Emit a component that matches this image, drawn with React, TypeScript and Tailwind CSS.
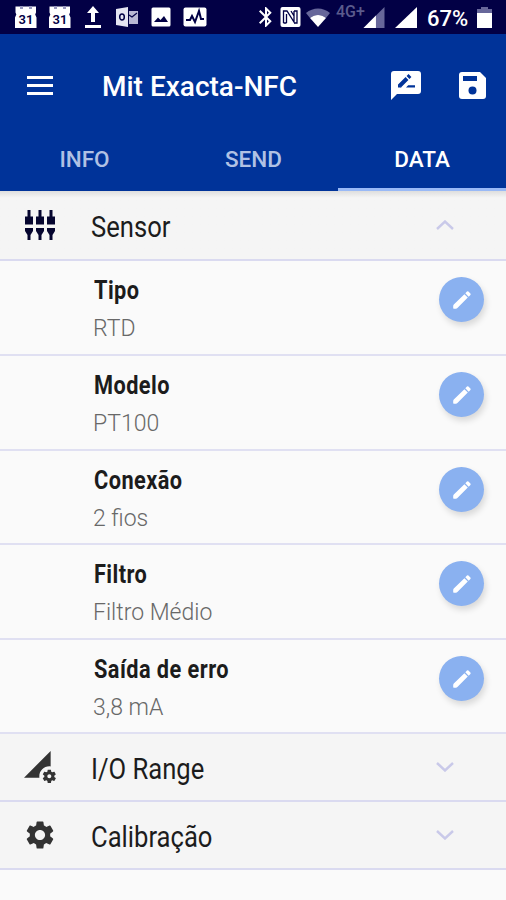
import { useState } from "react"
import type { ReactNode } from "react"
import { MdBluetooth, MdPermDataSetting, MdSettings } from "react-icons/md"

const tabs = ["INFO", "SEND", "DATA"]

const fields = [
  { label: "Tipo", value: "RTD", height: "h-[95px]" },
  { label: "Modelo", value: "PT100", height: "h-[95px]" },
  { label: "Conexão", value: "2 fios", height: "h-[94px]" },
  { label: "Filtro", value: "Filtro Médio", height: "h-[95px]" },
  { label: "Saída de erro", value: "3,8 mA", height: "h-[94px]" },
]

const CalendarIcon = () => (
  <svg viewBox="0 0 24 24" className="h-6 w-6" aria-hidden="true">
    <path fill="#fff" d="M1.5 1.5H22v6l-.8 2 1.3 3V23H1V12.5l1.3-3-.8-2z" />
    <path fill="#9a9ac0" d="M6 1h3v3H6zM15 1h3v3h-3z" />
    <text x="12" y="18.5" textAnchor="middle" fontSize="13" fontWeight="600" fill="#020045" fontFamily="Roboto">
      31
    </text>
  </svg>
)

const ReviewIcon = () => (
  <svg viewBox="0 0 30 30" className="h-[30px] w-[30px]" aria-hidden="true">
    <path fill="#fff" d="M3 1h24q3 0 3 3v17q0 3-3 3H6l-6 6V4q0-3 3-3z" />
    <path fill="none" stroke="#003399" strokeWidth="4" d="M8.5 16L16 8.500M17 7.500l2-2" />
    <path fill="#003399" d="M7 14v3.500h3.500zM15 17.500l2.200-2.300H24v2.300z" />
  </svg>
)

const SaveIcon = () => (
  <svg viewBox="0 0 27 27" className="h-[27px] w-[27px]" aria-hidden="true">
    <path fill="#fff" d="M3 0h18l6 6v18q0 3-3 3H3q-3 0-3-3V3q0-3 3-3z" />
    <path fill="#003399" d="M4 4h14v5H4z" />
    <circle cx="13.5" cy="18.5" r="4" fill="#003399" />
  </svg>
)

const SensorIcon = () => (
  <svg viewBox="0 0 32 32" className="h-8 w-8" fill="#060630" aria-hidden="true">
    <path d="M3.500 1h3v6.500H9v8H1v-8h2.500zM14.500 1h3v6.500H20v8h-8v-8h2.500zM25.500 1h3v6.500H31v8h-8v-8h2.500z" />
    <path d="M1 19h8v3l-2.500 4v5h-3v-5L1 22zM12 19h8v3l-2.500 4v5h-3v-5L12 22zM23 19h8v3l-2.500 4v5h-3v-5L23 22z" />
  </svg>
)

const PencilIcon = () => (
  <svg viewBox="0 0 18 18" className="h-[18px] w-[18px]" fill="#fff" aria-hidden="true">
    <path d="M11.400 3.200l3.400 3.400L4.400 17q-.7.700-1.500.7H.8q-.6 0-.6-.6V15q0-.8.6-1.400zM12.300 2.300L14 .6q.7-.6 1.400 0l2 2q.6.7 0 1.400l-1.700 1.700z" />
  </svg>
)

const StatusBar = () => (
  <div className="flex h-[34px] items-center bg-[#020045] pl-[14px] text-white">
    <CalendarIcon />
    <div className="ml-[10px] flex">
      <CalendarIcon />
    </div>
    <svg viewBox="0 0 18 22" className="ml-3 h-[22px] w-[18px]" aria-hidden="true">
      <path fill="#fff" d="M9 0l6 7h-4v9H7V7H3zM1 19h16v3H1z" />
    </svg>
    <svg viewBox="0 0 22 20" className="ml-[14px] h-5 w-[22px]" aria-hidden="true">
      <path fill="#e5e5f2" d="M0 2l12-2v20L0 18z" />
      <path fill="#b8b8d3" d="M13 4h9v13h-9z" />
      <path fill="none" stroke="#020045" strokeWidth="1.2" d="M13 8l3 2 5-4" />
      <ellipse cx="6" cy="10" rx="2.3" ry="3" fill="none" stroke="#020045" strokeWidth="1.5" />
    </svg>
    <svg viewBox="0 0 20 20" className="ml-[13px] h-5 w-5" aria-hidden="true">
      <rect width="19" height="19" x=".5" y=".5" rx="1.5" fill="#fff" />
      <path fill="#020045" d="M3 15l4-4.500 2.500 2.500L13 9l4 6z" />
    </svg>
    <svg viewBox="0 0 24 20" className="ml-3 h-5 w-6" aria-hidden="true">
      <rect width="23" height="19" x=".5" y=".5" rx="2" fill="#fff" />
      <path fill="none" stroke="#020045" strokeWidth="2" d="M3 13h4l2-4 3 6 4-11 2 8h3" />
    </svg>

    <MdBluetooth className="ml-[47px] h-6 w-6" />
    <svg viewBox="0 0 21 20" className="ml-[2px] h-5 w-[21px]" aria-hidden="true">
      <rect width="20" height="20" x=".5" rx="2" fill="#fff" />
      <path fill="none" stroke="#020045" strokeWidth="1.3" d="M3.500 16V4H7l7 11V4M6.500 16V7M11 4l3 5M3.500 16h3M14 4h3v12h-3" />
    </svg>
    <svg viewBox="0 0 24 20" className="mt-[2px] ml-[5px] h-5 w-6" aria-hidden="true">
      <path fill="#67679a" d="M0 5C7-1 17-1 24 5l-4 5C15 6 9 6 4 10z" />
      <path fill="#fff" d="M4 10c5-4 11-4 16 0l-8 9z" />
    </svg>
    <div className="ml-[6px] flex w-[50px] items-start">
      <span className="mt-[-2px] text-[16px] leading-4 font-medium text-[#5b5b8d]">4G+</span>
      <svg viewBox="0 0 22 22" className="-ml-[2px] mt-[1px] h-[21px] w-[22px] shrink-0" aria-hidden="true">
        <path fill="#67679a" d="M22 0v22H0z" />
        <path fill="#fff" d="M13 9v13H0z" />
      </svg>
    </div>
    <svg viewBox="0 0 22 21" className="ml-[9px] h-[21px] w-[22px]" aria-hidden="true">
      <path fill="#fff" d="M22 0v21H0z" />
    </svg>
    <span className="mt-[3px] ml-[10px] w-[42px] text-[22px] leading-6 font-medium">67%</span>
    <svg viewBox="0 0 15 22" className="mt-[2px] ml-[8px] h-[22px] w-[15px]" aria-hidden="true">
      <path fill="#67679a" d="M4 0h7v2h4v5H0V2h4z" />
      <path fill="#fff" d="M0 6h15v15H0z" />
    </svg>
  </div>
)

const Chevron = ({ open }: { open: boolean }) => (
  <svg viewBox="0 0 18 10" className="h-[10px] w-[18px]" fill="none" stroke="#c9c9e9" strokeWidth="2.4" aria-hidden="true">
    <path d={open ? "M1 9l8-7.500L17 9" : "M1 1l8 7.500L17 1"} />
  </svg>
)

interface SectionProps {
  icon: ReactNode
  title: string
  className: string
  open: boolean
  onClick: () => void
}

const SectionHeader = ({ icon, title, className, open, onClick }: SectionProps) => (
  <button
    type="button"
    onClick={onClick}
    className={`flex w-full items-center border-b-2 border-[#dadaf0] bg-[#f5f5f5] pr-[52px] pl-6 text-left ${className}`}
  >
    <span className="flex w-[67px]">{icon}</span>
    <span className="flex-1 origin-left scale-x-[0.883] pt-[3px] text-[29px] leading-9">{title}</span>
    <Chevron open={open} />
  </button>
)

export default function App() {
  const [tab, setTab] = useState("DATA")
  const [sensorOpen, setSensorOpen] = useState(true)
  const [rangeOpen, setRangeOpen] = useState(false)
  const [calibrationOpen, setCalibrationOpen] = useState(false)

  return (
    <div className="h-[900px] w-[506px] overflow-hidden bg-[#fafafa] font-[Roboto,sans-serif] text-[#1c1c1c]">
      <StatusBar />

      <header className="h-[157px] bg-[#003399] text-white">
        <div className="flex h-[102px] items-center pr-5 pl-[27px]">
          <button type="button" className="flex h-[19px] w-[26px] flex-col justify-between" aria-label="Menu">
            <span className="h-[3px] w-full bg-white" />
            <span className="h-[3px] w-full bg-white" />
            <span className="h-[3px] w-full bg-white" />
          </button>
          <h1 className="ml-[49px] flex-1 pt-[3px] text-[28px] leading-9 font-medium whitespace-nowrap">
            Mit Exacta-NFC
          </h1>
          <div className="mr-[38px]">
            <ReviewIcon />
          </div>
          <SaveIcon />
        </div>
        <nav className="grid h-[55px] grid-cols-[169px_169px_168px]">
          {tabs.map((name) => (
            <button
              key={name}
              type="button"
              onClick={() => setTab(name)}
              className={`border-b-3 pb-[6px] text-[22.5px] leading-7 font-medium ${
                tab === name ? "border-[#99b9f6] text-white" : "border-transparent text-[#b0c1e4]"
              }`}
            >
              {name}
            </button>
          ))}
        </nav>
      </header>

      <main>
        <SectionHeader
          icon={<SensorIcon />}
          title="Sensor"
          className="h-[70px] bg-linear-to-b from-[#dedede] via-[#f5f5f5] via-10% to-[#f5f5f5]"
          open={sensorOpen}
          onClick={() => setSensorOpen(!sensorOpen)}
        />
        {sensorOpen &&
          fields.map((field) => (
            <div
              key={field.label}
              className={`flex justify-between border-b-2 border-[#e0e0f2] pr-[22px] pl-[93px] ${field.height}`}
            >
              <div className="pt-[14px] whitespace-nowrap">
                <p className="ml-px origin-left scale-x-[0.87] text-[25px] leading-8 font-bold tracking-[0.5px]">
                  {field.label}
                </p>
                <p className="mt-[6px] text-[23px] leading-8 font-light text-[#686868]">{field.value}</p>
              </div>
              <button
                type="button"
                aria-label={field.label}
                className="mt-[16px] flex h-[45px] w-[45px] items-center justify-center rounded-full bg-[#8ab1f0] shadow-[2px_4px_6px_#0002]"
              >
                <PencilIcon />
              </button>
            </div>
          ))}
        <SectionHeader
          icon={<MdPermDataSetting className="h-8 w-8 text-[#333]" />}
          title="I/O Range"
          className="h-[68px]"
          open={rangeOpen}
          onClick={() => setRangeOpen(!rangeOpen)}
        />
        <SectionHeader
          icon={<MdSettings className="-ml-px h-[34px] w-[34px] text-[#333]" />}
          title="Calibração"
          className="h-[68px]"
          open={calibrationOpen}
          onClick={() => setCalibrationOpen(!calibrationOpen)}
        />
      </main>
    </div>
  )
}
